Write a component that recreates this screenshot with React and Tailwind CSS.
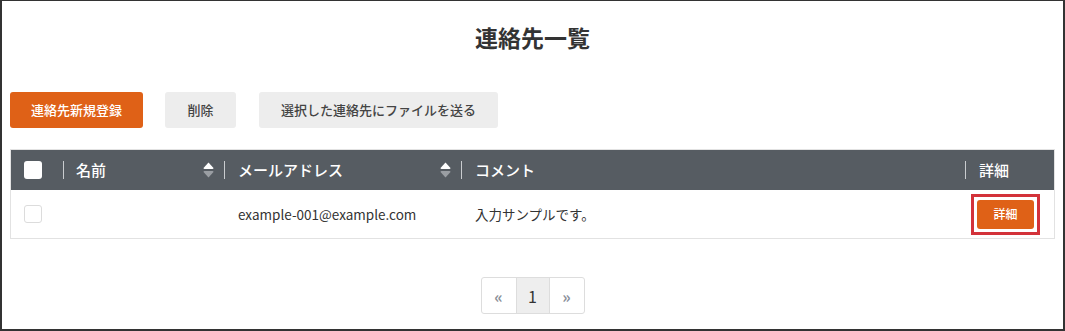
import React from "react";

const font = { fontFamily: '"Noto Sans CJK JP", "Noto Sans", sans-serif' };

function SortIcon() {
  return (
    <svg width="11" height="16" viewBox="0 0 11 16" className="shrink-0">
      <path d="M5.5 0.5 L10.5 6 Q10.5 7 9.5 7 L1.5 7 Q0.5 7 0.5 6 Z" fill="#ffffff" />
      <path d="M1.5 9 L9.5 9 Q10.5 9 10.5 10 L5.5 15.5 L0.5 10 Q0.5 9 1.5 9 Z" fill="#9a9ea3" />
    </svg>
  );
}

function Sep() {
  return <span className="block w-px h-[18px] bg-[#c9cccf] shrink-0" />;
}

export default function App() {
  return (
    <div
      className="w-[1065px] h-[331px] border-t border-b-2 border-x-2 border-[#333] bg-white px-2 text-[#333]"
      style={font}
    >
      <h1 className="pt-[20px] text-center text-[23px] font-bold leading-8 text-[#333]">
        連絡先一覧
      </h1>

      <div className="mt-[39px] flex items-center font-medium">
        <button className="h-9 w-[133px] rounded-[3px] bg-[#df6117] text-[13px] text-white">
          連絡先新規登録
        </button>
        <button className="ml-[22px] h-9 w-[71px] rounded-[3px] bg-[#ededed] text-[13px] text-[#444]">
          削除
        </button>
        <button className="ml-[23px] h-9 w-[239px] rounded-[3px] bg-[#ededed] text-[13px] text-[#444]">
          選択した連絡先にファイルを送る
        </button>
      </div>

      <div className="mt-[21px] border border-[#e2e2e2]">
        <div className="flex h-10 items-center bg-[#565c62] text-[15px] font-medium text-white">
          <div className="flex w-[52px] items-center pl-[13px]">
            <span className="block h-[18px] w-[18px] rounded-[3px] bg-white" />
          </div>
          <div className="flex w-[161px] items-center">
            <Sep />
            <span className="ml-[12px] flex-1">名前</span>
            <SortIcon />
            <span className="w-[10px]" />
          </div>
          <div className="flex w-[237px] items-center">
            <Sep />
            <span className="ml-[13px] flex-1">メールアドレス</span>
            <SortIcon />
            <span className="w-[10px]" />
          </div>
          <div className="flex flex-1 items-center">
            <Sep />
            <span className="ml-[13px]">コメント</span>
          </div>
          <div className="flex w-[89px] items-center">
            <Sep />
            <span className="ml-[13px]">詳細</span>
          </div>
        </div>

        <div className="flex h-[48px] items-center text-[13.5px] text-[#333]">
          <div className="flex w-[52px] items-center pl-[13px]">
            <span className="block h-[18px] w-[18px] rounded-[3px] border border-[#dcdcdc] bg-white" />
          </div>
          <div className="w-[161px]" />
          <div className="w-[237px] pl-[14px]">example-001@example.com</div>
          <div className="flex-1 pl-[14px]">入力サンプルです。</div>
          <div className="flex w-[89px] items-center pl-[6px]">
            <div className="border-[3px] border-[#d3323a] p-[3px]">
              <button className="h-[29px] w-[57px] rounded-[3px] bg-[#df6117] text-[12px] font-medium text-white">
                詳細
              </button>
            </div>
          </div>
        </div>
      </div>

      <div className="mt-[38px] flex justify-center">
        <div className="flex h-[37px] overflow-hidden rounded-[3px] border border-[#dddddd] text-[16px]">
          <span className="flex w-[34px] items-center justify-center font-bold text-[#8a9099]">«</span>
          <span className="flex w-[34px] items-center justify-center border-x border-[#dddddd] bg-[#eeeeee] text-[#333]">
            1
          </span>
          <span className="flex w-[34px] items-center justify-center font-bold text-[#8a9099]">»</span>
        </div>
      </div>
    </div>
  );
}
